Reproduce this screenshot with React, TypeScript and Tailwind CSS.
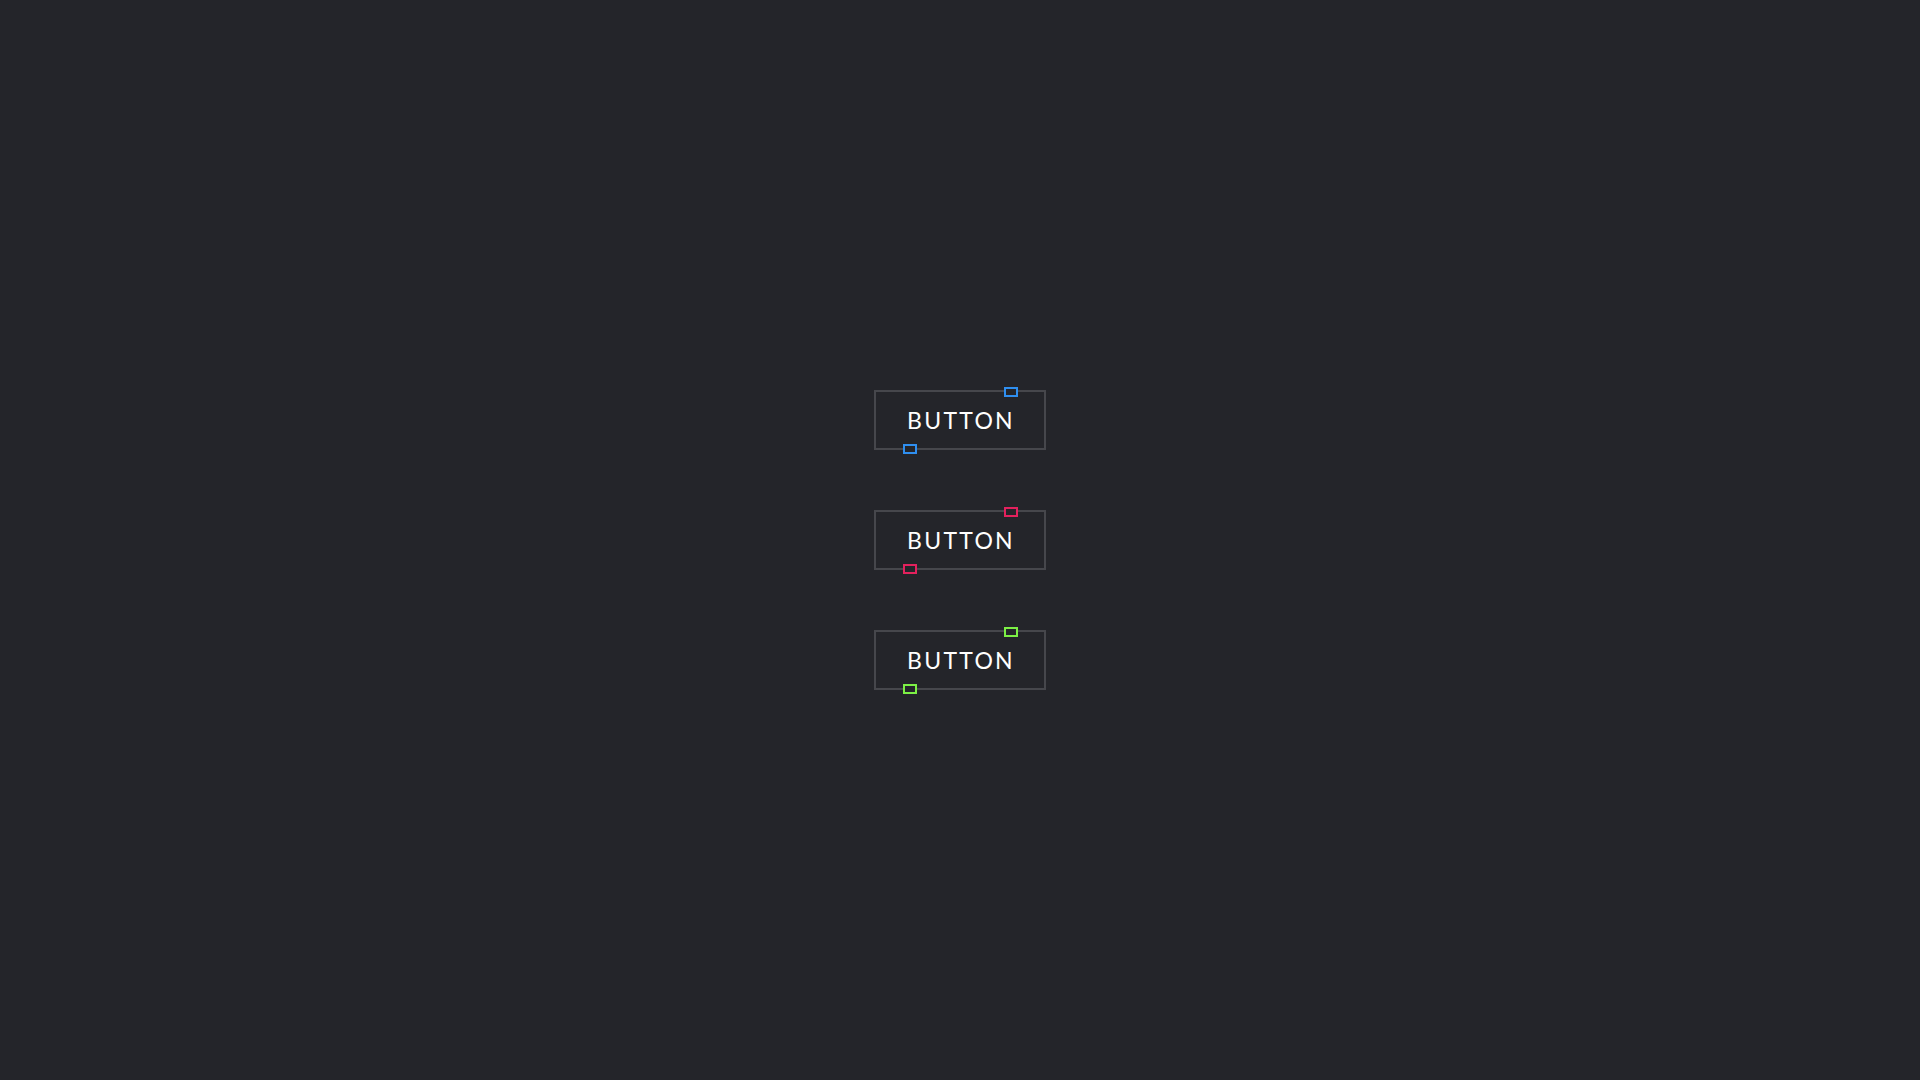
const buttons = [
  { color: "border-[#2f8ff0]" },
  { color: "border-[#e3215d]" },
  { color: "border-[#7cf045]" },
];

export default function App() {
  return (
    <div className="min-h-screen w-full bg-[#24252a] flex flex-col items-center justify-center gap-[60px]">
      {buttons.map((b, i) => (
        <button
          key={i}
          className="relative w-[172px] h-[60px] border-2 border-[#46474c] flex items-center justify-center text-white text-[23px] tracking-[0.1em] pl-[2px]"
          style={{ fontFamily: "Lato, 'Open Sans', sans-serif" }}
        >
          BUTTON
          <span className={`absolute left-[128px] top-[-5px] w-[14px] h-[10px] border-2 bg-[#24252a] ${b.color}`} />
          <span className={`absolute left-[27px] top-[52px] w-[14px] h-[10px] border-2 bg-[#24252a] ${b.color}`} />
        </button>
      ))}
    </div>
  );
}
